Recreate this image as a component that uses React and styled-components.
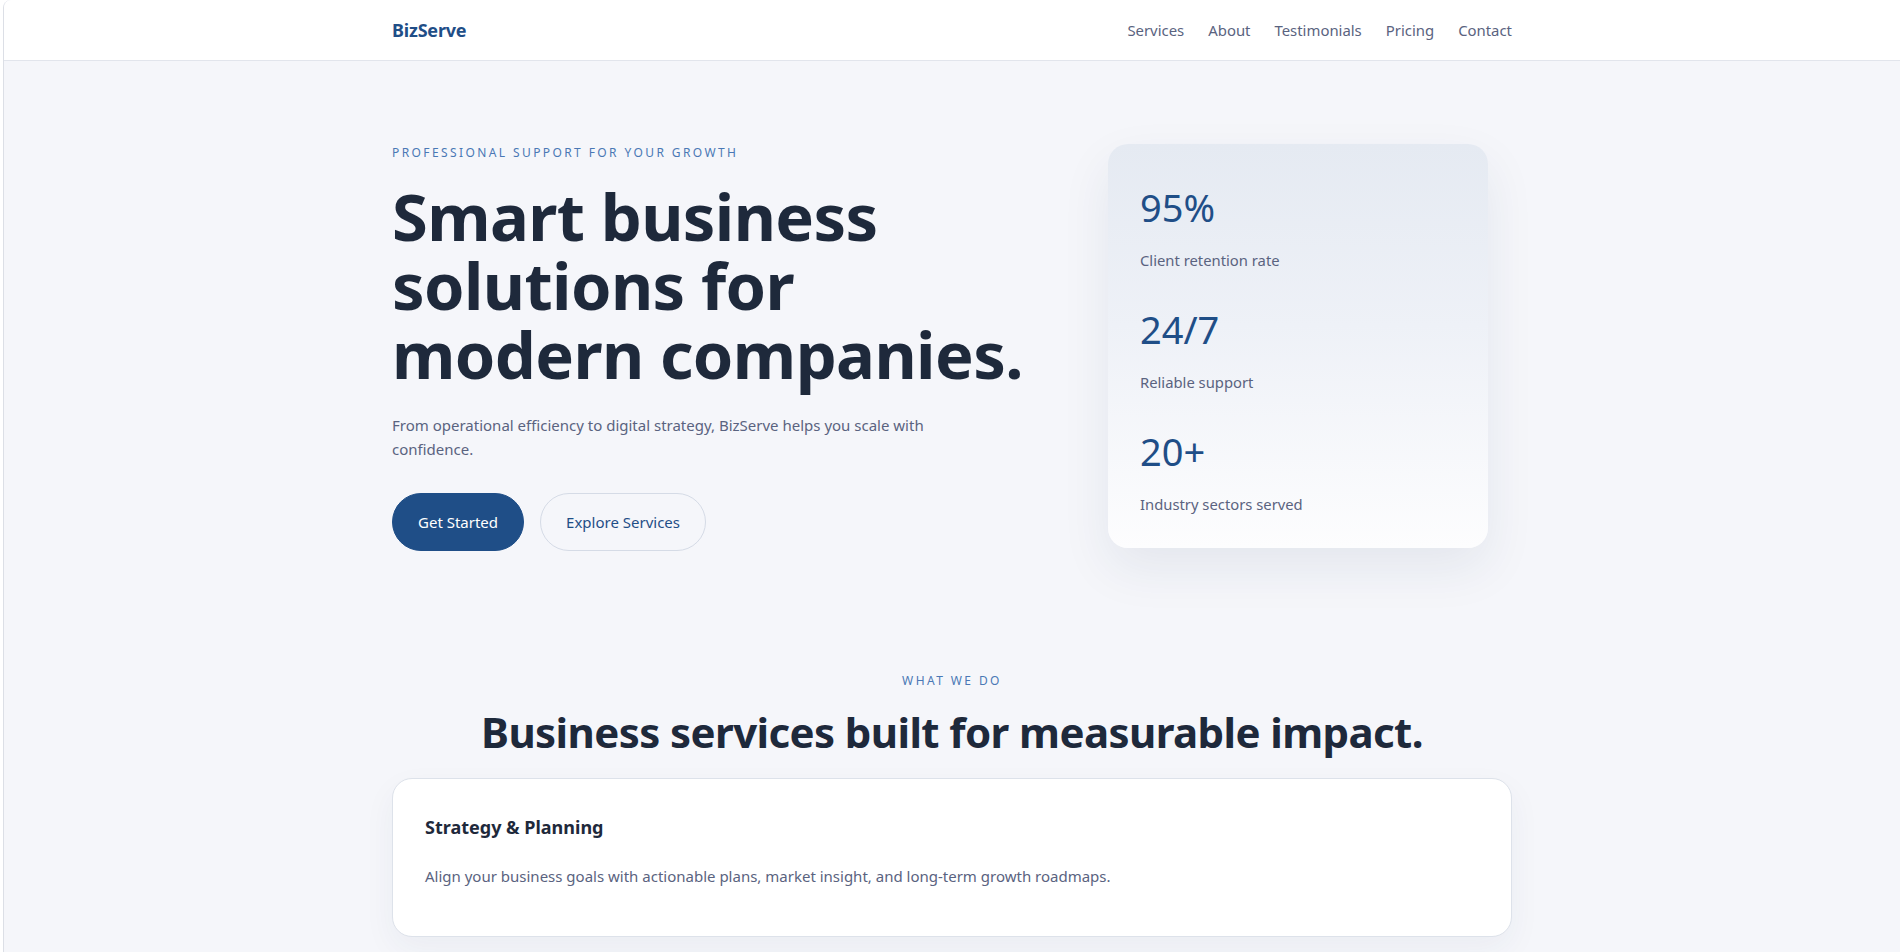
import React from 'react'
import styled, { createGlobalStyle } from 'styled-components'

const GlobalStyle = createGlobalStyle`
  * {
    box-sizing: border-box;
  }
  html,
  body {
    margin: 0;
    padding: 0;
    background: #ffffff;
  }
  body {
    font-family: 'Segoe UI', 'Noto Sans', 'Open Sans', sans-serif;
    color: #1e293b;
    -webkit-font-smoothing: antialiased;
  }
`

const Frame = styled.div`
  margin-left: 3px;
  min-height: 100vh;
  background: #f5f6fa;
  border-left: 1px solid #dcdfe6;
  border-top-left-radius: 8px;
  overflow: hidden;
`

const Container = styled.div`
  width: 1120px;
  margin: 0 auto;
`

const Header = styled.header`
  background: #ffffff;
  border-bottom: 1px solid #e2e5ec;
`

const NavBar = styled(Container)`
  height: 60px;
  display: flex;
  align-items: center;
  justify-content: space-between;
`

const Logo = styled.a`
  font-size: 18px;
  font-weight: 700;
  color: #1f4e87;
  text-decoration: none;
  letter-spacing: -0.2px;
`

const NavLinks = styled.nav`
  display: flex;
  gap: 24px;
`

const NavLink = styled.a`
  font-size: 14.9px;
  color: #5a6380;
  text-decoration: none;
`

const Hero = styled(Container)`
  display: grid;
  grid-template-columns: 1fr 380px;
  align-items: start;
  padding: 83px 24px 0 0;
`

const Eyebrow = styled.p`
  margin: 0;
  font-size: 12px;
  line-height: 18px;
  letter-spacing: 2.4px;
  text-transform: uppercase;
  color: #4a78b5;
  text-align: ${({ center }) => (center ? 'center' : 'left')};
`

const Title = styled.h1`
  margin: 20px 0 0;
  font-size: 65px;
  line-height: 69px;
  font-weight: 700;
  letter-spacing: -0.6px;
  color: #1e293b;
`

const Lead = styled.p`
  margin: 24px 0 0;
  max-width: 560px;
  font-size: 15px;
  line-height: 24px;
  color: #5a6380;
`

const Actions = styled.div`
  display: flex;
  gap: 16px;
  margin-top: 32px;
`

const Button = styled.a`
  display: inline-flex;
  align-items: center;
  height: 58px;
  padding: 0 25px;
  border-radius: 999px;
  font-size: 15px;
  text-decoration: none;
  background: ${({ primary }) => (primary ? '#1f4e87' : 'transparent')};
  color: ${({ primary }) => (primary ? '#ffffff' : '#1f4e87')};
  border: 1px solid ${({ primary }) => (primary ? '#1f4e87' : '#d5dbe6')};
`

const StatsCard = styled.aside`
  display: flex;
  flex-direction: column;
  gap: 34px;
  padding: 39px 32px 33px;
  border-radius: 20px;
  background: linear-gradient(180deg, #e5eaf2 0%, #eef1f7 45%, #fdfdfe 100%);
  box-shadow: 0 20px 50px rgba(30, 50, 90, 0.08);
`

const Stat = styled.div`
  display: flex;
  flex-direction: column;
  gap: 18px;
`

const StatValue = styled.span`
  font-size: 38px;
  line-height: 48px;
  font-weight: 400;
  color: #1f4e87;
`

const StatLabel = styled.span`
  font-size: 14.8px;
  line-height: 22px;
  color: #5a6380;
`

const Services = styled(Container)`
  padding: 121px 0 80px;
`

const SectionTitle = styled.h2`
  margin: 14px 0 0;
  text-align: center;
  font-size: 42px;
  line-height: 56px;
  font-weight: 700;
  letter-spacing: -0.6px;
  color: #1e293b;
`

const ServiceList = styled.div`
  display: grid;
  gap: 24px;
  margin-top: 18px;
`

const ServiceCard = styled.article`
  padding: 35px 32px 49px;
  background: #ffffff;
  border: 1px solid #dde2ea;
  border-radius: 20px;
  box-shadow: 0 12px 32px rgba(30, 50, 90, 0.05);
`

const ServiceName = styled.h3`
  margin: 0;
  font-size: 18px;
  line-height: 26px;
  font-weight: 700;
  color: #1e293b;
`

const ServiceText = styled.p`
  margin: 25px 0 0;
  font-size: 15px;
  line-height: 22px;
  color: #5a6380;
`

const navItems = ['Services', 'About', 'Testimonials', 'Pricing', 'Contact']

const stats = [
  { value: '95%', label: 'Client retention rate' },
  { value: '24/7', label: 'Reliable support' },
  { value: '20+', label: 'Industry sectors served' },
]

const services = [
  {
    name: 'Strategy & Planning',
    text: 'Align your business goals with actionable plans, market insight, and long-term growth roadmaps.',
  },
  {
    name: 'Operations Consulting',
    text: 'Streamline workflows, cut overhead, and build processes that hold up as your team grows.',
  },
  {
    name: 'Digital Transformation',
    text: 'Modernize your tools and systems with practical technology adoption and change management.',
  },
]

export default function App() {
  return (
    <Frame>
      <GlobalStyle />
      <Header>
        <NavBar>
          <Logo href="#">BizServe</Logo>
          <NavLinks>
            {navItems.map((item) => (
              <NavLink key={item} href={`#${item.toLowerCase()}`}>
                {item}
              </NavLink>
            ))}
          </NavLinks>
        </NavBar>
      </Header>

      <Hero>
        <div>
          <Eyebrow>Professional support for your growth</Eyebrow>
          <Title>
            Smart business
            <br />
            solutions for
            <br />
            modern companies.
          </Title>
          <Lead>
            From operational efficiency to digital strategy, BizServe helps you scale with
            confidence.
          </Lead>
          <Actions>
            <Button primary href="#contact">
              Get Started
            </Button>
            <Button href="#services">Explore Services</Button>
          </Actions>
        </div>
        <StatsCard>
          {stats.map((s) => (
            <Stat key={s.value}>
              <StatValue>{s.value}</StatValue>
              <StatLabel>{s.label}</StatLabel>
            </Stat>
          ))}
        </StatsCard>
      </Hero>

      <Services id="services">
        <Eyebrow center>What we do</Eyebrow>
        <SectionTitle>Business services built for measurable impact.</SectionTitle>
        <ServiceList>
          {services.map((s) => (
            <ServiceCard key={s.name}>
              <ServiceName>{s.name}</ServiceName>
              <ServiceText>{s.text}</ServiceText>
            </ServiceCard>
          ))}
        </ServiceList>
      </Services>
    </Frame>
  )
}
